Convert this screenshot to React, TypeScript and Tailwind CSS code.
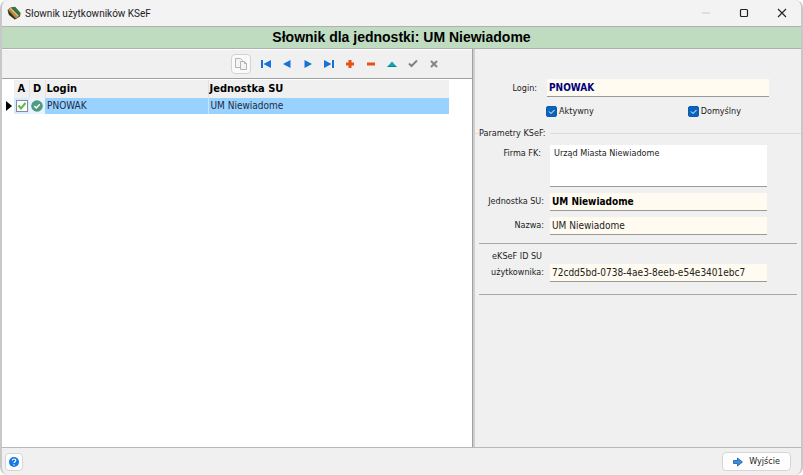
import { useState, type ReactNode } from "react";

const users = [{ login: "PNOWAK", unit: "UM Niewiadome", active: true, isDefault: true }];

const field =
  "block w-full h-[18px] px-0.5 bg-[#fffbf0] border-b border-[#9a9a9a] outline-none text-[10px] leading-4";

function ToolButton(props: { label: string; children: ReactNode }) {
  return (
    <button
      type="button"
      aria-label={props.label}
      className="w-[21px] h-5 flex items-center justify-center"
    >
      <svg viewBox="0 0 12 12" className="size-3">
        {props.children}
      </svg>
    </button>
  );
}

function TitleBar() {
  return (
    <header className="h-[26px] shrink-0 flex items-center justify-between bg-[#f3f3f3] pl-[5px]">
      <div className="flex items-center gap-1 text-[10px] text-[#222]">
        <svg viewBox="0 0 14 14" className="size-3.5">
          <path d="M0.5 4 3.5 1.5 8 1l5.500 6-.5 3.500L8 13.500 2 9z" fill="#43502a" />
          <path d="M1 3.5 3 2l8.5 8.5L9 12.5z" fill="#c9873d" />
          <path d="M3 2.5 4 1.8l7.800 8-.8.8z" fill="#e8cf92" />
          <path d="M4.5 1.2 8 .8l5.500 6.200-1 2.600z" fill="#2c7a43" />
          <path d="M1 5 8 12.200v1.300L2 8.500z" fill="#25331c" />
        </svg>
        <span className="font-[Roboto,sans-serif]">Słownik użytkowników KSeF</span>
      </div>
      <div className="flex">
        <button type="button" aria-label="Minimalizuj" className="w-[38px] h-6 flex items-center justify-center">
          <svg viewBox="0 0 10 10" className="size-2.5">
            <path d="M1 5h8" stroke="#c9c9c9" />
          </svg>
        </button>
        <button type="button" aria-label="Maksymalizuj" className="w-[38px] h-6 flex items-center justify-center">
          <svg viewBox="0 0 10 10" className="size-2.5" fill="none">
            <rect x="1.5" y="1.5" width="7" height="7" rx="1" stroke="#222" strokeWidth="1.2" />
          </svg>
        </button>
        <button type="button" aria-label="Zamknij" className="w-[38px] h-6 flex items-center justify-center">
          <svg viewBox="0 0 10 10" className="size-2.5">
            <path d="m1 1 8 8M9 1 1 9" stroke="#222" strokeWidth="1.1" />
          </svg>
        </button>
      </div>
    </header>
  );
}

function Toolbar() {
  return (
    <div className="h-[29px] flex items-center justify-end pr-7 bg-[#f0f0f0] border-b border-[#a0a0a0]">
      <button
        type="button"
        aria-label="Kopiuj"
        className="size-5 mr-1 flex items-center justify-center rounded-sm border border-[#d3d3d3] bg-[#fafafa]"
      >
        <svg viewBox="0 0 14 14" className="size-3.5" fill="#f4f4f4" stroke="#b4b4b4">
          <path d="M1.5 1.5h5l2 2v7h-7z" />
          <path d="M6.5 4.5h4l2 2v6h-6z" />
          <path d="M10.5 4.5v2h2" fill="none" />
        </svg>
      </button>
      <ToolButton label="Pierwszy">
        <path d="M1 2h2v8H1z" fill="#1672d8" />
        <path d="M11 2v8L3.5 6z" fill="#1672d8" />
      </ToolButton>
      <ToolButton label="Poprzedni">
        <path d="M9.5 2v8L2 6z" fill="#1672d8" />
      </ToolButton>
      <ToolButton label="Następny">
        <path d="M2.5 2v8L10 6z" fill="#1672d8" />
      </ToolButton>
      <ToolButton label="Ostatni">
        <path d="M1 2v8l7.5-4z" fill="#1672d8" />
        <path d="M9 2h2v8H9z" fill="#1672d8" />
      </ToolButton>
      <ToolButton label="Dodaj">
        <path d="M4.5 2h3v2.5H10v3H7.5V10h-3V7.5H2v-3h2.5z" fill="#e8500f" />
      </ToolButton>
      <ToolButton label="Usuń">
        <path d="M2 4.5h8v3H2z" fill="#e8500f" />
      </ToolButton>
      <ToolButton label="Edytuj">
        <path d="M1.5 8.5h9L6 3.5z" fill="#12a5b5" />
        <path d="M1.5 8h9v1h-9z" fill="#0d7c8a" />
      </ToolButton>
      <ToolButton label="Zatwierdź">
        <path d="m2 5.5 2.5 2.5L10 2.5" fill="none" stroke="#808080" strokeWidth="2" />
      </ToolButton>
      <ToolButton label="Anuluj">
        <path d="m3 3 6 6m0-6-6 6" stroke="#858585" strokeWidth="2" />
      </ToolButton>
    </div>
  );
}

function UserTable() {
  return (
    <table className="w-[95%] table-fixed border-collapse text-[10px] leading-4 text-left">
      <colgroup>
        <col className="w-3" />
        <col className="w-[15px]" />
        <col className="w-4" />
        <col className="w-[163px]" />
        <col />
      </colgroup>
      <thead>
        <tr className="h-[18px] text-[11px] text-black">
          <th aria-label="Wskaźnik" />
          <th className="bg-[#f0f0f0] text-center border-r border-[#e2e2e2]">A</th>
          <th className="bg-[#f0f0f0] text-center border-r border-[#e2e2e2]">D</th>
          <th className="bg-[#f0f0f0] pl-px border-r border-[#e2e2e2]">Login</th>
          <th className="bg-[#f0f0f0] pl-px">Jednostka SU</th>
        </tr>
      </thead>
      <tbody>
        {users.map((u) => (
          <tr key={u.login} className="h-4 text-[#1c2c40]">
            <td>
              <svg viewBox="0 0 6 10" className="ml-1 h-2.5 w-1.5">
                <path d="M0 0v10l6-5z" fill="#000" />
              </svg>
            </td>
            <td className="bg-[#d6ebff]">
              {u.active && (
                <svg viewBox="0 0 12 12" className="mx-auto size-3" role="img" aria-label="Aktywny">
                  <rect x=".5" y=".5" width="11" height="11" fill="#fff" stroke="#858c94" />
                  <path d="m2.5 5.5 2.5 3L9.500 3" fill="none" stroke="#5cb84c" strokeWidth="2" />
                </svg>
              )}
            </td>
            <td className="bg-[#e8f3fd]">
              {u.isDefault && (
                <svg viewBox="0 0 12 12" className="mx-auto size-3" role="img" aria-label="Domyślny">
                  <circle cx="6" cy="6" r="5.8" fill="#4f9a80" />
                  <path d="m3.3 6 2 2 3.5-3.7" fill="none" stroke="#fff" strokeWidth="1.5" />
                </svg>
              )}
            </td>
            <td className="bg-[#99d1ff] pl-0.5 border-r border-[#c9e4fb]">{u.login}</td>
            <td className="bg-[#99d1ff] pl-0.5">{u.unit}</td>
          </tr>
        ))}
      </tbody>
    </table>
  );
}

function Check(props: { label: string }) {
  const [checked, setChecked] = useState(true);
  return (
    <label className="flex items-center gap-0.5 text-[9px] leading-3">
      <span className="relative size-[11px]">
        <input
          type="checkbox"
          checked={checked}
          onChange={() => setChecked(!checked)}
          className="block size-[11px] appearance-none rounded-xs border border-[#0a5cae] checked:bg-[#0a64bd]"
        />
        {checked && (
          <svg viewBox="0 0 11 11" className="absolute inset-0 size-[11px] pointer-events-none">
            <path d="m3 5.5 2 2 3.5-3.5" fill="none" stroke="#fff" />
          </svg>
        )}
      </span>
      {props.label}
    </label>
  );
}

function Row(props: { id: string; label: ReactNode; children: ReactNode }) {
  return (
    <div className="flex items-end gap-1.5 pr-[34px]">
      <label htmlFor={props.id} className="w-[69px] shrink-0 pb-0.5 text-right text-[9px] leading-4">
        {props.label}
      </label>
      <div className="flex-1">{props.children}</div>
    </div>
  );
}

function UserForm() {
  return (
    <form className="w-[40.8%] shrink-0 pt-[30px] bg-[#f0f0f0] text-[#222]">
      <div className="flex items-center gap-2.5 pl-2 pr-8">
        <label htmlFor="login" className="w-[54px] shrink-0 text-right text-[9px] leading-4">
          Login:
        </label>
        <input id="login" defaultValue="PNOWAK" className={`${field} font-bold text-[#00007b]`} />
      </div>
      <div className="mt-2 flex justify-between pl-[71px] pr-[60px]">
        <Check label="Aktywny" />
        <Check label="Domyślny" />
      </div>
      <fieldset className="mt-2 border-t border-[#dcdcdc]">
        <legend className="ml-1 pr-1 text-[9px] leading-4">Parametry KSeF:</legend>
        <div className="pt-1 flex flex-col gap-1.5">
          <div className="flex items-start gap-[9px] pr-[34px]">
            <label htmlFor="firma" className="w-[66px] shrink-0 text-right text-[9px] leading-4">
              Firma FK:
            </label>
            <textarea
              id="firma"
              defaultValue="Urząd Miasta Niewiadome"
              className="block h-[42px] min-w-0 flex-1 resize-none border-b border-[#9a9a9a] bg-white px-1 text-[9px] leading-4 outline-none"
            />
          </div>
          <Row id="jednostka" label="Jednostka SU:">
            <input id="jednostka" defaultValue="UM Niewiadome" className={`${field} font-bold text-black`} />
          </Row>
          <Row id="nazwa" label="Nazwa:">
            <input id="nazwa" defaultValue="UM Niewiadome" className={field} />
          </Row>
        </div>
      </fieldset>
      <div className="mx-1 mt-2 border-y border-[#a8a8a8] pt-1 pb-3">
        <div className="-mx-1">
          <Row
            id="ksefid"
            label={
              <>
                <span className="block pr-0.5">eKSeF ID SU</span>
                użytkownika:
              </>
            }
          >
            <input
              id="ksefid"
              defaultValue="72cdd5bd-0738-4ae3-8eeb-e54e3401ebc7"
              className={field}
            />
          </Row>
        </div>
      </div>
    </form>
  );
}

export default function App() {
  return (
    <div className="min-h-screen flex flex-col overflow-hidden rounded-lg border-x-2 border-[#c8c8c8] bg-[#f0f0f0] font-['DejaVu_Sans_Condensed','DejaVu_Sans',sans-serif]">
      <TitleBar />
      <h1 className="h-[23px] shrink-0 border-y border-[#b0b0b0] bg-[#c0dcc0] text-center font-['Liberation_Sans',sans-serif] text-[14px] font-bold leading-[21px] text-black">
        Słownik dla jednostki: UM Niewiadome
      </h1>
      <main className="flex flex-1">
        <section className="flex-1 min-w-0 bg-white pt-px">
          <Toolbar />
          <div className="pt-px">
            <UserTable />
          </div>
        </section>
        <div className="w-[3px] border-l border-[#a0a0a0] bg-[#cfcfcf]" />
        <UserForm />
      </main>
      <footer className="h-7 shrink-0 flex items-center justify-between border-t border-[#b8b8b8] pl-[3px] pr-2.5">
        <button
          type="button"
          aria-label="Pomoc"
          className="size-[18px] flex items-center justify-center rounded-sm border border-[#d5d5d5] bg-[#fdfdfd]"
        >
          <svg viewBox="0 0 12 12" className="size-3">
            <circle cx="6" cy="6" r="5" fill="#1478e6" />
            <path d="M4.3 4.6c0-2.2 3.5-2.1 3.5 0C7.8 5.8 6 5.7 6 7.1M6 8.2v1.2" fill="none" stroke="#fff" strokeWidth="1.2" />
          </svg>
        </button>
        <button
          type="button"
          className="h-[19px] flex items-center gap-1.5 rounded-sm border border-[#d5d5d5] bg-[#fdfdfd] px-2.5 text-[9px] text-[#222]"
        >
          <svg viewBox="0 0 10 10" className="size-2.5">
            <path d="M.5 3.5h4V1l5 4-5 4V6.5h-4z" fill="#3b8ee0" stroke="#1f5c9f" strokeWidth=".8" />
          </svg>
          Wyjście
        </button>
      </footer>
    </div>
  );
}
